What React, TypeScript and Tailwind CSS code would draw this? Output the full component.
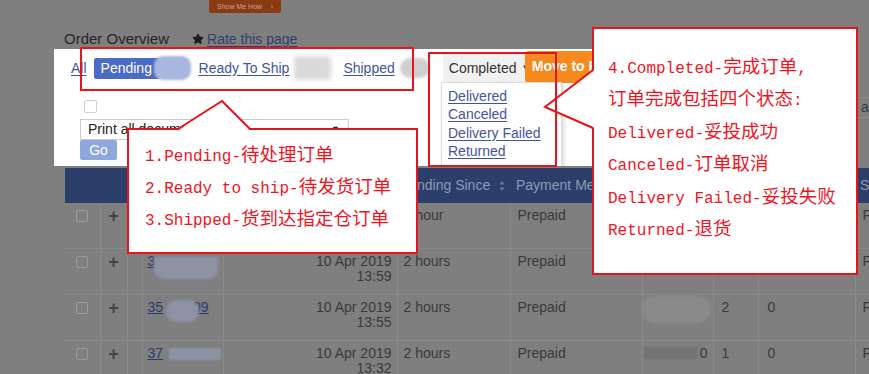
import { Star } from 'lucide-react';

const tabLink = 'shrink-0 whitespace-nowrap text-[14px] text-[#44549f] underline underline-offset-[2px]';
const cell = 'border-b border-r border-[#898989] align-top pt-[5px] leading-[15px] text-[14px] text-[#3a3a3a]';

const rows = [
  { id: 1, date: '', time: '', since: '1 hour', qty: '', b: '', c: '' },
  { id: 2, date: '10 Apr 2019', time: '13:59', since: '2 hours', qty: '', b: '', c: '' },
  { id: 3, date: '10 Apr 2019', time: '13:55', since: '2 hours', qty: 'blur', b: '2', c: '0' },
  { id: 4, date: '10 Apr 2019', time: '13:32', since: '2 hours', qty: 'part', b: '1', c: '0' },
];

const noteLeft = ['1.Pending-待处理订单', '2.Ready to ship-待发货订单', '3.Shipped-货到达指定仓订单'];
const noteRight = [
  '4.Completed-完成订单,',
  '订单完成包括四个状态:',
  'Delivered-妥投成功',
  'Canceled-订单取消',
  'Delivery Failed-妥投失败',
  'Returned-退货',
];

// latin runs are set a bit smaller so they sit at half the CJK width
function Mixed({ text }: { text: string }) {
  const parts = text.split(/([\x20-\x7e]+)/).filter(Boolean);
  return (
    <>
      {parts.map((p, i) =>
        /^[\x20-\x7e]+$/.test(p) ? (
          <span key={i} className="text-[16px]">{p}</span>
        ) : (
          <span key={i}>{p}</span>
        )
      )}
    </>
  );
}

function OrderNumber({ id }: { id: number }) {
  if (id === 2)
    return (
      <div className="relative">
        <span className="text-[#2d3a6c] underline">3</span>
        <div className="absolute left-[6px] top-[3px] h-[22px] w-[64px] rounded-b-[10px] bg-[#8e92a5] blur-[1.5px]" />
      </div>
    );
  if (id === 3)
    return (
      <div className="relative">
        <span className="text-[#2d3a6c] underline">
          35<span className="inline-block w-[30px]" />09
        </span>
        <div className="absolute left-[18px] top-[0px] h-[22px] w-[33px] rounded-full bg-[#8e92a5] blur-[1.5px]" />
      </div>
    );
  if (id === 4)
    return (
      <div className="relative">
        <span className="text-[#2d3a6c] underline">37</span>
        <div className="absolute left-[21px] top-[2px] h-[12px] w-[52px] bg-[#8e92a5] blur-[1px]" />
      </div>
    );
  return null;
}

export default function App() {
  return (
    <div className="relative h-[374px] w-[869px] overflow-hidden bg-[#7f7f7f] font-['Liberation_Sans',Arial,sans-serif] text-[14px]">
      {/* top strip */}
      <div className="flex h-[13px] pl-[209px]">
        <div className="flex h-[13px] w-[72px] items-center justify-between rounded-b-[2px] bg-[#8a3b14] px-[8px] text-[7px] leading-none text-[#c9a38f]">
          <span>Show Me How</span>
          <span>›</span>
        </div>
      </div>

      {/* title */}
      <div className="mt-[15px] flex h-[22px] items-center pl-[64px]">
        <span className="text-[15px] text-[#262626]">Order Overview</span>
        <Star className="ml-[23px] h-[12px] w-[12px] fill-[#1d1d1d] text-[#1d1d1d]" />
        <span className="ml-[3px] text-[14px] text-[#34406a] underline underline-offset-[2px]">Rate this page</span>
      </div>

      {/* highlighted filter panel */}
      <div className="-mt-[1px] flex h-[117px]">
        <div className="relative ml-[54px] w-[539px] shrink-0 overflow-hidden bg-white">
          <div className="flex h-[36px] items-center pl-[17px] pt-[2px]">
            <span className={tabLink}>All</span>
            <div className="ml-[7px] flex h-[21px] w-[66px] shrink-0 items-center rounded-[2px] bg-[#4a6cc4] pl-[7px] text-white">
              Pending
            </div>
            <div className="-ml-[6px] h-[24px] w-[37px] shrink-0 rounded-[9px] bg-[#a9b6df] blur-[1px]" />
            <span className={`ml-[8px] ${tabLink}`}>Ready To Ship</span>
            <div className="ml-[5px] h-[24px] w-[37px] shrink-0 rounded-[4px] bg-[#dadada] blur-[2px]" />
            <span className={`ml-[12px] ${tabLink}`}>Shipped</span>
            <div className="ml-[5px] h-[20px] w-[30px] shrink-0 rounded-full bg-[#cfcfcf] blur-[1.5px]" />
            <div className="ml-[13px] flex h-[30px] w-[82px] shrink-0 items-center whitespace-nowrap bg-[#f1f1f1] pl-[6px] text-[#333]">
              Completed<span className="ml-[5px] text-[8px]">▼</span>
            </div>
            <div className="-mt-[3px] flex h-[32px] w-[80px] shrink-0 items-center whitespace-nowrap rounded-[4px] bg-[#f68a1f] pl-[7px] font-bold text-white">
              Move to F
            </div>
          </div>

          <div className="flex flex-col pl-[26px]">
            <div className="ml-[4px] mt-[15px] h-[13px] w-[13px] rounded-[2px] border border-[#cfcfcf]" />
            <div className="mt-[6px] flex h-[21px] w-[269px] items-center justify-between border border-[#cccccc] pl-[7px] pr-[8px] text-[#222]">
              <span className="whitespace-nowrap">Print all documents</span>
              <span className="text-[9px]">▼</span>
            </div>
            <div className="flex h-[20px] w-[37px] items-center justify-center rounded-[2px] bg-[#8ea7dc] text-white">Go</div>
          </div>

          {/* completed dropdown */}
          <div className="absolute left-[387px] top-[33px] flex h-[86px] w-[121px] flex-col border border-[#dddddd] bg-white pl-[6px] pt-[4px] leading-[18.4px] shadow-[2px_2px_4px_rgba(0,0,0,0.15)]">
            <span className={tabLink}>Delivered</span>
            <span className={tabLink}>Canceled</span>
            <span className={tabLink}>Delivery Failed</span>
            <span className={tabLink}>Returned</span>
          </div>
        </div>

        <div className="ml-[264px] mt-[48px] h-[21px] w-[40px] shrink-0 border border-[#8c8c8c] pl-[3px] leading-[19px] text-[#3a3a3a]">a</div>
      </div>

      {/* orders table */}
      <div className="ml-[65px] mt-[2px] w-[870px]">
        <table className="w-[870px] table-fixed border-collapse">
          <colgroup>
            <col className="w-[35px]" />
            <col className="w-[27px]" />
            <col className="w-[15px]" />
            <col className="w-[81px]" />
            <col className="w-[174px]" />
            <col className="w-[113px]" />
            <col className="w-[132px]" />
            <col className="w-[71px]" />
            <col className="w-[45px]" />
            <col className="w-[97px]" />
            <col className="w-[80px]" />
          </colgroup>
          <thead>
            <tr className="h-[35px] bg-[#2c3e6a] text-left text-[14px] font-normal text-[#8e9ab6]">
              <th />
              <th />
              <th />
              <th />
              <th />
              <th className="pl-[20px] font-normal">
                <span className="flex items-center whitespace-nowrap">
                  nding Since
                  <svg className="ml-[9px]" width="6" height="12" viewBox="0 0 6 12">
                    <path d="M3 1 L5.5 4.5 H0.5 Z" fill="#6b7a9c" />
                    <path d="M3 11 L5.5 7.5 H0.5 Z" fill="#6b7a9c" />
                  </svg>
                </span>
              </th>
              <th className="pl-[6px] font-normal whitespace-nowrap">Payment Me</th>
              <th />
              <th />
              <th />
              <th className="pl-[5px] font-normal">S</th>
            </tr>
          </thead>
          <tbody>
            {rows.map((r) => (
              <tr key={r.id} className={r.id === 1 ? 'h-[45px]' : 'h-[46px]'}>
                <td className={`${cell} pl-[11px]`}>
                  <div className="mt-[2px] h-[12px] w-[12px] rounded-[2px] border border-[#9b9b9b]" />
                </td>
                <td className={`${cell} pt-[6px] text-center text-[18px] font-bold text-[#444]`}>+</td>
                <td className={cell} />
                <td className={`${cell} pl-[5px]`}>
                  <OrderNumber id={r.id} />
                </td>
                <td className={`${cell} pr-[5px] text-right`}>
                  <div>{r.date}</div>
                  <div>{r.time}</div>
                </td>
                <td className={`${cell} pl-[6px]`}>
                  {r.id === 1 ? <span className="pl-[12px]">hour</span> : r.since}
                </td>
                <td className={`${cell} pl-[7px]`}>Prepaid</td>
                <td className={`${cell} pr-[5px] text-right`}>
                  {r.qty === 'blur' && <div className="-ml-[2px] -mt-[4px] h-[27px] w-[70px] rounded-full bg-[#8a8a8a] blur-[1.5px]" />}
                  {r.qty === 'part' && (
                    <div className="flex items-center justify-end">
                      <div className="mr-[3px] h-[12px] w-[53px] bg-[#737373] blur-[1px]" />0
                    </div>
                  )}
                </td>
                <td className={`${cell} pl-[8px]`}>{r.b}</td>
                <td className={`${cell} pl-[9px]`}>{r.c}</td>
                <td className={`${cell} pl-[7px]`}>F</td>
              </tr>
            ))}
          </tbody>
        </table>
      </div>

      {/* annotation: left callout */}
      <div className="absolute left-[127px] top-[128px] h-[126px] w-[291px] border-2 border-[#e8141b] bg-white pl-[16px] pt-[11px] font-['Liberation_Mono','Noto_Sans_CJK_SC',monospace] text-[18.5px] leading-[32px] whitespace-pre text-[#f0141e]">
        {noteLeft.map((t) => (
          <div key={t}>
            <Mixed text={t} />
          </div>
        ))}
      </div>

      {/* annotation: right callout */}
      <div className="absolute left-[592px] top-[27px] h-[248px] w-[266px] border-2 border-[#e8141b] bg-white pl-[14px] pt-[24px] font-['Liberation_Mono','Noto_Sans_CJK_SC',monospace] text-[18.5px] leading-[32.4px] whitespace-pre text-[#f0141e]">
        {noteRight.map((t) => (
          <div key={t}>
            <Mixed text={t} />
          </div>
        ))}
      </div>

      {/* callout tails */}
      <svg className="pointer-events-none absolute left-0 top-0" width="869" height="374">
        <polygon points="178,130.5 222,101 250,130.5" fill="#ffffff" />
        <polyline points="178,129 222,101 250,129" fill="none" stroke="#e8141b" strokeWidth="2" />
        <polygon points="594.5,70 545,107 594.5,128" fill="#ffffff" />
        <polyline points="593,70 545,107 593,128" fill="none" stroke="#e8141b" strokeWidth="2" />
      </svg>

      {/* highlight frames */}
      <div className="absolute left-[80px] top-[47px] h-[44px] w-[334px] border-2 border-[#e8141b]" />
      <div className="absolute left-[428px] top-[52px] h-[115px] w-[129px] border-2 border-[#e8141b]" />
    </div>
  );
}
